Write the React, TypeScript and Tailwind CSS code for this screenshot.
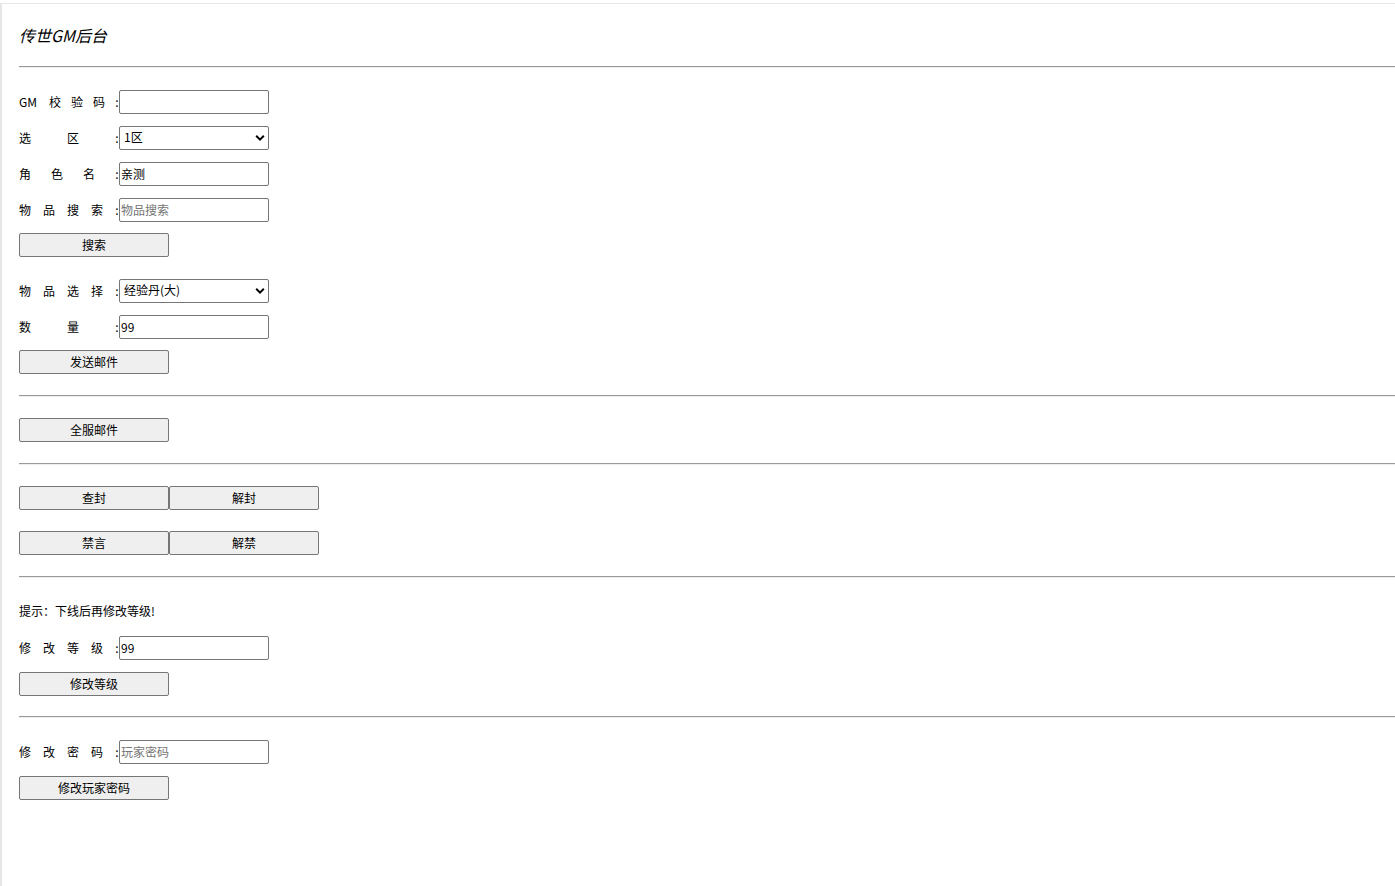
import React from "react";

const font = { fontFamily: '"Microsoft YaHei","Noto Sans CJK SC","Noto Sans",sans-serif' };

function Label({ text, track }: { text: string; track: string }) {
  return <span className={`inline-block w-[96px] whitespace-nowrap ${track}`}>{text}</span>;
}

function Row({ label, children, cls = "" }: { label: React.ReactNode; children: React.ReactNode; cls?: string }) {
  return (
    <div className={`flex items-center h-[24px] text-[12px] text-black ${cls}`}>
      {label}
      <span className="inline-block w-[4px] text-center">:</span>
      {children}
    </div>
  );
}

function Input({ value, placeholder }: { value?: string; placeholder?: string }) {
  return (
    <input
      defaultValue={value}
      placeholder={placeholder}
      className="block w-[150px] h-[24px] border border-[#767676] rounded-[2px] px-[1px] pb-[2px] text-[12px] text-black placeholder:text-[#757575] outline-none bg-white"
      style={font}
    />
  );
}

function Select({ value }: { value: string }) {
  return (
    <div className="relative w-[150px] h-[24px]">
      <select
        defaultValue={value}
        className="block appearance-none w-[150px] h-[24px] border border-[#767676] rounded-[2px] pl-[4px] pb-[2px] text-[12px] text-black bg-white outline-none"
        style={font}
      >
        <option>{value}</option>
      </select>
      <svg className="absolute right-[4px] top-[8px] pointer-events-none" width="10" height="8" viewBox="0 0 10 8">
        <path d="M1.2 1.8 L5 5.6 L8.8 1.8" stroke="#000" strokeWidth="2" fill="none" />
      </svg>
    </div>
  );
}

function Btn({ text }: { text: string }) {
  return (
    <button
      className="block w-[150px] h-[24px] border border-[#767676] rounded-[2px] bg-[#efefef] text-[12px] leading-[20px] text-black"
      style={font}
    >
      {text}
    </button>
  );
}

function Hr({ cls }: { cls: string }) {
  return <div className={`h-[2px] border-t border-[#9a9a9a] border-b border-b-[#eeeeee] ${cls}`} />;
}

export default function App() {
  return (
    <div className="w-[1395px] h-[886px] bg-white pt-[3px] overflow-hidden" style={font}>
      <div className="h-[883px] border-t border-l-2 border-[#e6e6e6] pl-[17px]">
        <div className="mt-[19px] h-[24px] leading-[24px] text-[16px] italic text-black">传世GM后台</div>
        <Hr cls="mt-[19px]" />

        <Row
          cls="mt-[22px]"
          label={
            <span className="inline-block w-[96px] whitespace-nowrap">
              <span>GM</span>
              <span className="tracking-[10px] ml-[12px]">校验码</span>
            </span>
          }
        >
          <Input />
        </Row>
        <Row cls="mt-[12px]" label={<Label text="选区" track="tracking-[36px]" />}>
          <Select value="1区" />
        </Row>
        <Row cls="mt-[12px]" label={<Label text="角色名" track="tracking-[20px]" />}>
          <Input value="亲测" />
        </Row>
        <Row cls="mt-[12px]" label={<Label text="物品搜索" track="tracking-[12px]" />}>
          <Input placeholder="物品搜索" />
        </Row>
        <div className="mt-[11px] flex">
          <Btn text="搜索" />
        </div>
        <Row cls="mt-[22px]" label={<Label text="物品选择" track="tracking-[12px]" />}>
          <Select value="经验丹(大)" />
        </Row>
        <Row cls="mt-[12px]" label={<Label text="数量" track="tracking-[36px]" />}>
          <Input value="99" />
        </Row>
        <div className="mt-[11px] flex">
          <Btn text="发送邮件" />
        </div>
        <Hr cls="mt-[21px]" />
        <div className="mt-[21px] flex">
          <Btn text="全服邮件" />
        </div>
        <Hr cls="mt-[21px]" />
        <div className="mt-[21px] flex">
          <Btn text="查封" />
          <Btn text="解封" />
        </div>
        <div className="mt-[21px] flex">
          <Btn text="禁言" />
          <Btn text="解禁" />
        </div>
        <Hr cls="mt-[21px]" />
        <div className="mt-[24px] h-[18px] leading-[18px] text-[12px] text-black">提示：下线后再修改等级!</div>
        <Row cls="mt-[16px]" label={<Label text="修改等级" track="tracking-[12px]" />}>
          <Input value="99" />
        </Row>
        <div className="mt-[12px] flex">
          <Btn text="修改等级" />
        </div>
        <Hr cls="mt-[20px]" />
        <Row cls="mt-[22px]" label={<Label text="修改密码" track="tracking-[12px]" />}>
          <Input placeholder="玩家密码" />
        </Row>
        <div className="mt-[12px] flex">
          <Btn text="修改玩家密码" />
        </div>
      </div>
    </div>
  );
}
